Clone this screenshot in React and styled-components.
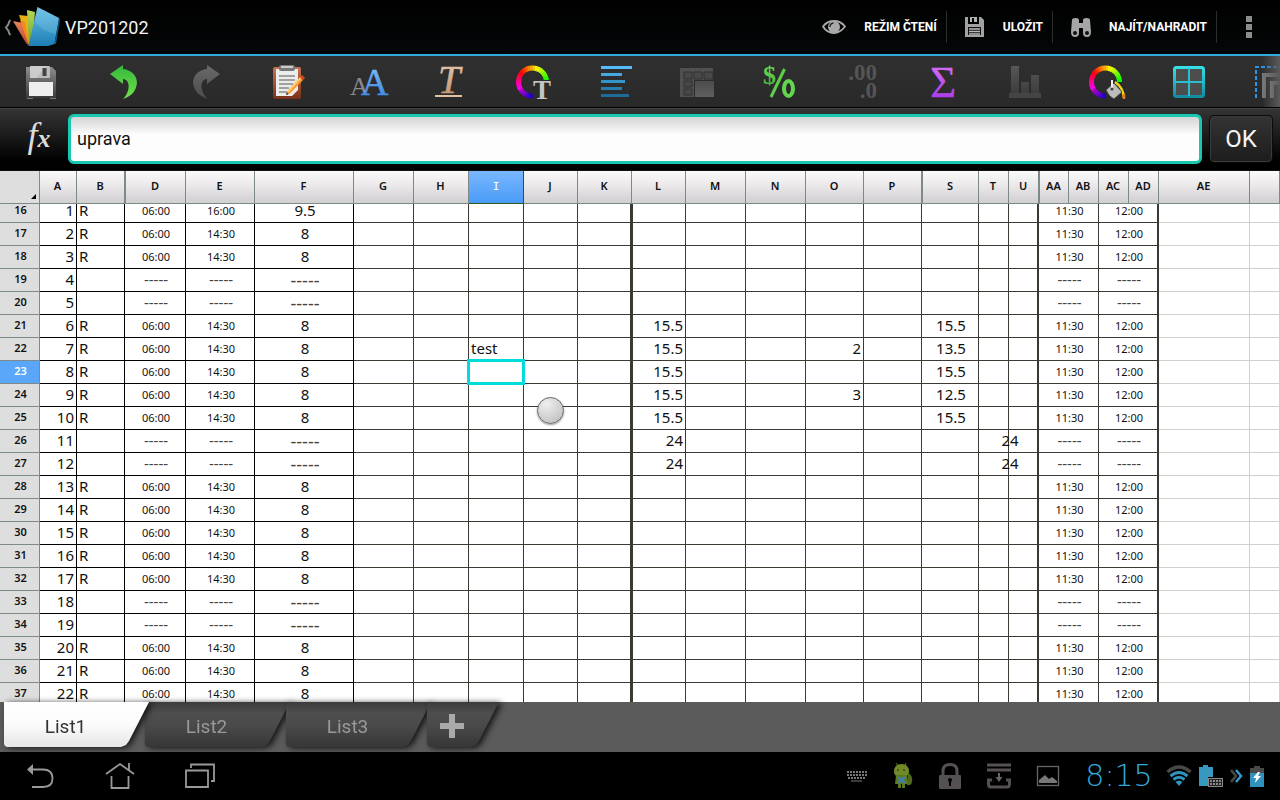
import React from 'react'
import styled, { createGlobalStyle, css } from 'styled-components'

const GlobalStyle = createGlobalStyle`
    * { box-sizing: border-box; }
    body {
        margin: 0;
        background: #000;
        font-family: Roboto, "Noto Sans", sans-serif;
    }
    button { font-family: inherit; border: 0; padding: 0; cursor: pointer; }
    svg { display: block; flex: none; overflow: visible; }
`

const Screen = styled.div`
    height: 100vh;
    display: flex;
    flex-direction: column;
    overflow: hidden;
`

/* ---------- title bar ---------- */

const TitleBar = styled.header`
    height: 56px;
    flex: none;
    display: flex;
    align-items: center;
    background: linear-gradient(#000, #050708);
    border-bottom: 2px solid #33aadc;
`

const UpButton = styled.button`
    display: flex;
    align-items: center;
    padding-left: 4px;
    background: none;
`

const Title = styled.h1`
    flex: 1;
    margin: 0 0 0 5px;
    font-size: 18px;
    font-weight: 400;
    color: #f3f3f3;
`

const Action = styled.button`
    height: 32px;
    display: flex;
    align-items: center;
    gap: 18px;
    padding: 0 9px 0 18px;
    background: none;
    border-right: 1px solid #2c2c2c;
    color: #fff;
    font-size: 12px;
    font-weight: 700;
`

const Overflow = styled.button`
    width: 63px;
    height: 32px;
    display: flex;
    align-items: center;
    justify-content: center;
    background: none;
`

/* ---------- tool bar ---------- */

const ToolBar = styled.nav`
    position: relative;
    height: 52px;
    flex: none;
    display: flex;
    overflow: hidden;
    background: linear-gradient(#303030, #292929);
    border-bottom: 1px solid #000;

    &::after {
        content: "";
        position: absolute;
        top: 0;
        right: 0;
        bottom: 0;
        width: 18px;
        background: linear-gradient(90deg, rgba(90, 90, 90, 0), #5a5a5a);
        pointer-events: none;
    }
`

const Tool = styled.button`
    width: 82px;
    flex: none;
    display: flex;
    align-items: center;
    justify-content: center;
    background: none;
`

/* ---------- formula bar ---------- */

const FormulaBar = styled.form`
    height: 63px;
    flex: none;
    display: flex;
    align-items: center;
    gap: 8px;
    padding: 0 8px 2px 0;
    background: linear-gradient(#343434, #1a1a1a 45%, #000 85%);
    border-top: 1px solid #444;
    border-bottom: 1px solid #111;
`

const FormulaField = styled.label`
    flex: 1;
    display: flex;
    align-items: center;
`

const FxMark = styled.span`
    width: 68px;
    padding: 0 0 4px 10px;
    text-align: center;
    color: #ddd;
    font: italic 400 36px/40px "Liberation Serif", serif;

    small {
        font-size: 26px;
        font-weight: 700;
    }
`

const FormulaInput = styled.input`
    flex: 1;
    min-width: 0;
    height: 50px;
    padding: 0 6px;
    border: 3px solid #19c8b0;
    border-radius: 6px;
    outline: none;
    background: linear-gradient(#d4d4d4, #fdfdfd 40%);
    color: #111;
    font-family: inherit;
    font-size: 18px;
`

const OkButton = styled.button`
    width: 62px;
    height: 46px;
    border: 1px solid #3a3a3a;
    border-radius: 4px;
    background: linear-gradient(#333, #1d1d1d);
    box-shadow: 0 0 0 1px #0a0a0a;
    color: #f5f5f5;
    font-size: 24px;
`

/* ---------- sheet ---------- */

const Sheet = styled.main`
    flex: 1;
    min-height: 0;
    overflow: hidden;
    background: #fff;
`

const Grid = styled.table`
    width: 100%;
    table-layout: fixed;
    border-collapse: separate;
    border-spacing: 0;
    font-family: "Noto Sans", "Open Sans", sans-serif;
    color: #111;
`

const Corner = styled.td`
    height: 33px;
    padding: 0 3px 4px;
    vertical-align: bottom;
    background: #dedede;
    border-right: 1px solid #7d8a87;
    border-bottom: 1px solid #7d8a87;

    svg { margin-left: auto; }
`

const ColHead = styled.th`
    height: 33px;
    padding: 0 1px 2px 0;
    background: linear-gradient(#fafafa, #e9e6e8 50%, #d9d7d9 82%, #cfd1cf);
    border-right: 1px solid #7d8a87;
    border-bottom: 1px solid #7d8a87;
    font-size: 11px;
    font-weight: 600;
    line-height: 16px;

    ${p => p.$skip && css`border-left: 1px solid #7d8a87;`}
    ${p => p.$active && css`
        padding: 0;
        background: linear-gradient(#7ab7ff, #4a9bf7);
        border-color: #2c5a1c;
        color: #fff;
        font-family: "DejaVu Sans Mono", monospace;
        font-weight: 400;
    `}
`

const RowHead = styled.th`
    padding: 0;
    background: ${p => (p.$active ? '#5aa7fa' : '#dedede')};
    color: ${p => (p.$active ? '#fff' : '#111')};
    border-right: 1px solid #7d8a87;
    border-bottom: 1px solid #7d8a87;
    font-weight: 600;
`

const edge = {
    black: '1px solid #000',
    dark: '1px solid #3a3a33',
    light: '1px solid #d0d0d0',
}

const Cell = styled.td`
    position: relative;
    padding: 0;
    border-right: ${p => edge[p.$line]};
    border-bottom: ${p => edge[p.$line]};
    ${p => p.$thick && css`border-right-width: 2px;`}
    ${p => p.$thickLeft && css`border-left: ${edge.dark};`}
`

// the top row is scrolled partly under the header, so its text hangs from the bottom
const CellText = styled.div`
    height: ${p => (p.$cut ? 18 : 22)}px;
    display: flex;
    align-items: flex-end;
    justify-content: ${p => p.$align || 'center'};
    padding: ${p => (p.$align ? '0 2px' : '0 0 0 2px')};
    font-size: ${p => p.$size}px;
    line-height: ${p => p.$leading}px;
    color: ${p => (p.$dash ? '#444' : 'inherit')};
    white-space: nowrap;
    ${p => p.$across && css`
        position: relative;
        z-index: 1;
        width: 60px;
    `}
`

const Selection = styled.div`
    position: absolute;
    inset: -2px;
    z-index: 1;
    border: 3px solid #00dcdc;
`

const TouchHandle = styled.div`
    position: absolute;
    top: 13px;
    left: 13px;
    z-index: 2;
    width: 27px;
    height: 27px;
    border: 1px solid #666;
    border-radius: 50%;
    background: radial-gradient(circle at 35% 25%, #efefef, #b8b8b8);
    box-shadow: 0 1px 2px rgba(0, 0, 0, 0.4);
`

/* ---------- sheet tabs ---------- */

const TabBar = styled.div`
    height: 50px;
    flex: none;
    display: flex;
    padding-left: 4px;
    background: #5b5b5b;
`

const Tab = styled.button`
    position: relative;
    z-index: ${p => (p.$active ? 2 : 1)};
    width: ${p => (p.$short ? 72 : 145)}px;
    height: 46px;
    margin-right: -4px;
    padding: 2px 22px 0 0;
    display: flex;
    align-items: center;
    justify-content: center;
    background: none;
    color: ${p => (p.$active ? '#333' : '#999')};
    font-size: 19px;
    filter: drop-shadow(3px 1px 3px rgba(0, 0, 0, 0.8));

    &::before {
        content: "";
        position: absolute;
        inset: 0;
        z-index: -1;
        clip-path: polygon(
            0 0, 100% 0, calc(100% - 20px) 39px, calc(100% - 23px) 43px,
            calc(100% - 28px) 45px, 3px 45px, 1px 44px, 0 42px
        );
        background: ${p => (p.$active
            ? 'linear-gradient(#fff, #fbfbfb 50%, #e4e4e4)'
            : 'linear-gradient(#3c3c3c, #4e4e4e 25%, #4a4a4a 50%, #363636)')};
    }
`

/* ---------- system bar ---------- */

const SystemBar = styled.footer`
    height: 48px;
    flex: none;
    display: flex;
    align-items: center;
    justify-content: space-between;
    background: #000;
`

const NavKeys = styled.div`
    display: flex;
`

const NavKey = styled.button`
    width: 80px;
    height: 48px;
    display: flex;
    align-items: center;
    justify-content: center;
    background: none;
`

const Tray = styled.div`
    display: flex;
    align-items: center;
    gap: 26px;
    padding-right: 16px;
`

const Status = styled.div`
    display: flex;
    align-items: center;
    gap: 7px;
    margin-left: -6px;
`

const Clock = styled.time`
    width: 80px;
    text-align: center;
    color: #33a9dc;
    font: 200 30px/40px "DejaVu Sans", sans-serif;
`

/* ---------- icons ---------- */

const serif = '"Liberation Serif", serif'

const Icon = ({ w = 36, h = 36, children }) => (
    <svg width={w} height={h} viewBox={`0 0 ${w} ${h}`} aria-hidden="true">{children}</svg>
)

const Fade = ({ id, from, to }) => (
    <linearGradient id={id} x1="0" y1="0" x2="0" y2="1">
        <stop offset="0" stopColor={from} />
        <stop offset="1" stopColor={to} />
    </linearGradient>
)

const ColorRing = () => {
    const point = a => {
        const r = (a * Math.PI) / 180
        return `${17.5 + 14 * Math.cos(r)} ${18 - 14 * Math.sin(r)}`
    }
    const steps = Array.from({ length: 27 }, (_, i) => i * 10)
    return steps.map(a => (
        <path
            key={a}
            d={`M${point(a)}A14 14 0 0 0 ${point(a + 11)}`}
            fill="none"
            strokeWidth="5"
            stroke={`hsl(${(480 - (a * 240) / 270) % 360} 100% ${a > 200 ? 40 : 50}%)`}
        />
    ))
}

const Logo = () => (
    <Icon w={56} h={42}>
        <defs>
            <Fade id="lgBlue" from="#69bde6" to="#1d7fb5" />
            <Fade id="lgRed" from="#e88458" to="#b8402c" />
            <Fade id="lgGreen" from="#b6d855" to="#6a9e2c" />
        </defs>
        <path d="M6.500 14Q5 15 4.500 18L2 21.500L4.500 25Q5 28 6.500 29" fill="none" stroke="#888" strokeWidth="2" />
        <path d="M9 15L19 17L25 40L22 37Z" fill="url(#lgRed)" />
        <path d="M15 9L24 10L26 40L24 37Z" fill="#e8b010" />
        <path d="M16 14L21 16L25 39Z" fill="#ef8a24" />
        <path d="M23 4L31 6L28 40H25Z" fill="url(#lgGreen)" />
        <path d="M33.500 1L55 12L50.500 38L44 40L24.500 40Z" fill="url(#lgBlue)" />
        <path d="M55 12L56 13.500L52 38L50.500 38Z" fill="#0d598c" />
        <path d="M33.500 1L55 12L52 28Q38 26 30 14Z" fill="#8fd3f0" opacity="0.25" />
    </Icon>
)

const SaveTool = () => (
    <Icon>
        <defs><Fade id="svBody" from="#8d8d8d" to="#3a3a3a" /></defs>
        <path d="M3 3H29L33 7V34H3Z" fill="url(#svBody)" />
        <rect x="7" y="2" width="20" height="12" rx="1" fill="#bcbcbc" />
        <path d="M7 2H24L13 14H7Z" fill="#dcdcdc" opacity="0.5" />
        <rect x="19.500" y="4" width="4" height="8" fill="#444" />
        <rect x="6" y="18" width="24" height="14" fill="#eee" />
        <rect x="4" y="34" width="6" height="1" fill="#777" />
        <rect x="27" y="34" width="6" height="1" fill="#777" />
    </Icon>
)

const UndoTool = () => (
    <Icon>
        <defs><Fade id="undo" from="#35b83c" to="#6fe04a" /></defs>
        <path d="M5 10L18 1V5C27 6 32 12 32 19C31 27 27 32 18 35C25 28 26 16 18 15V20Z" fill="url(#undo)" />
    </Icon>
)

const RedoTool = () => (
    <Icon>
        <defs><Fade id="redo" from="#6a6a6a" to="#4b4b4b" /></defs>
        <path d="M33 10L20 1V5C11 6 6 12 6 19C7 27 12 32 21 35C13 28 12 16 20 15V20Z" fill="url(#redo)" />
    </Icon>
)

const ClipboardTool = () => (
    <Icon>
        <defs><Fade id="board" from="#c97350" to="#7a3018" /></defs>
        <rect x="4" y="3" width="28" height="32" rx="2" fill="url(#board)" />
        <path d="M7 5H29V26L23 32H7Z" fill="#ececec" />
        <path d="M10 12H26M10 16H26M10 20H24M10 24H20M10 28H18" stroke="#888" strokeWidth="1.500" />
        <rect x="10" y="1" width="16" height="6" rx="2" fill="#777" />
        <rect x="12" y="2" width="12" height="2" fill="#ccc" />
        <path d="M17 31L18.500 27L31 13L34 16L21 29.500Z" fill="#f59c2c" />
        <path d="M19 28L31.500 14" stroke="#ffd58a" strokeWidth="1.200" />
        <path d="M31 13L33 11L36 14L34 16Z" fill="#e0461c" />
        <path d="M17 31L18 28.500L19.500 30Z" fill="#222" />
    </Icon>
)

const FontSizeTool = () => (
    <Icon>
        <defs><Fade id="bigA" from="#8cc4ff" to="#2f7fe0" /></defs>
        <text x="-1" y="31" fontFamily={serif} fontSize="26" fill="#8b8b8b">A</text>
        <text x="10" y="31" fontFamily={serif} fontSize="38" stroke="url(#bigA)" strokeWidth="0.500" fill="url(#bigA)">A</text>
    </Icon>
)

const TextStyleTool = () => (
    <Icon>
        <defs><Fade id="tan" from="#e9cdb4" to="#b98c69" /></defs>
        <text x="5" y="29" fontFamily={serif} fontSize="40" fontStyle="italic" stroke="url(#tan)" strokeWidth="0.500" fill="url(#tan)">T</text>
        <path d="M2 32H29" stroke="#e2c0a2" strokeWidth="2" />
    </Icon>
)

const TextColorTool = () => (
    <Icon>
        <ColorRing />
        <text x="18" y="35" fontFamily={serif} fontSize="27" fontWeight="700" fill="#c4c4c4" stroke="#2b2b2b" strokeWidth="2" paintOrder="stroke">T</text>
    </Icon>
)

const AlignTool = () => (
    <Icon>
        <path d="M4 3.500H35" stroke="#55bbfb" strokeWidth="3" />
        <path d="M4 10.500H25" stroke="#46a9e2" strokeWidth="3" />
        <path d="M4 17.500H28" stroke="#3294c9" strokeWidth="3" />
        <path d="M4 24.500H25" stroke="#277ead" strokeWidth="3" />
        <path d="M4 31.500H32" stroke="#1e6b98" strokeWidth="3" />
    </Icon>
)

const CellsTool = () => (
    <Icon>
        <defs><Fade id="cells" from="#4b4b4b" to="#5f5f5f" /></defs>
        <path d="M1 4H34V16H15V33H1Z" fill="#505050" />
        <path d="M5 8H13V15H5ZM15 8H23V15H15ZM25 8H34V15H25ZM5 17H13V23H5ZM5 25H13V31H5Z" fill="#484848" stroke="#303030" />
        <rect x="16" y="17" width="19" height="16" fill="url(#cells)" />
    </Icon>
)

const CurrencyTool = () => (
    <Icon>
        <defs><Fade id="money" from="#79e35a" to="#3fae3c" /></defs>
        <text x="2" y="20" fontFamily={serif} fontSize="26" fontWeight="700" fill="url(#money)">$</text>
        <path d="M23.500 5L10 33" stroke="#5fcf4b" strokeWidth="3" />
        <ellipse cx="27.500" cy="24.500" rx="4.500" ry="7.500" fill="none" stroke="#63d64c" strokeWidth="4" />
    </Icon>
)

const DecimalTool = () => (
    <Icon>
        <g fontFamily={serif} fontSize="23" fontWeight="700" fill="#555" textAnchor="end">
            <text x="34" y="16">.00</text>
            <text x="34" y="34">.0</text>
        </g>
    </Icon>
)

const SumTool = () => (
    <Icon>
        <defs><Fade id="sum" from="#dd7bf2" to="#a22fe8" /></defs>
        <text x="5" y="33" fontFamily={serif} fontSize="45" stroke="url(#sum)" strokeWidth="0.300" fill="url(#sum)">Σ</text>
    </Icon>
)

const ChartTool = () => (
    <Icon>
        <defs><Fade id="bars" from="#575757" to="#3d3d3d" /></defs>
        <path d="M4 2H12V29H4ZM14 18H22V29H14ZM24 11H32V29H24Z" fill="url(#bars)" />
        <rect x="2" y="29" width="32" height="5" fill="#454545" />
    </Icon>
)

const FillTool = () => (
    <Icon>
        <g transform="translate(-1 0)"><ColorRing /></g>
        <path d="M26 18Q34 23 35 34" fill="none" stroke="#f4d716" strokeWidth="2.500" />
        <path d="M35 30V35" stroke="#ef7b1c" strokeWidth="2.500" />
        <path d="M17 26L25 19L33 28L25 35Q20 33 17 26Z" fill="#bdbdbd" stroke="#444" strokeWidth="1" />
        <path d="M23 16V25" stroke="#eee" strokeWidth="2" />
        <circle cx="23" cy="25" r="1.500" fill="#444" />
    </Icon>
)

const BorderTool = () => (
    <Icon>
        <defs><Fade id="border" from="#35dfe6" to="#128ea5" /></defs>
        <rect x="3.500" y="3.500" width="29" height="29" rx="2" fill="#4d4d4d" stroke="url(#border)" strokeWidth="3" />
        <rect x="17" y="4" width="2" height="28" fill="#25bfd0" />
        <rect x="4" y="17" width="28" height="2" fill="#25bfd0" />
    </Icon>
)

const FreezeTool = () => (
    <Icon>
        <path d="M36 3H3V34" fill="none" stroke="#2a95f0" strokeWidth="2" strokeDasharray="4 2" />
        <path d="M36 11H11V34" fill="none" stroke="#777" strokeWidth="4" />
        <path d="M36 19H19V34" fill="none" stroke="#888" strokeWidth="4" />
    </Icon>
)

const EyeIcon = () => (
    <Icon w={24} h={18}>
        <path d="M1 8.500Q5 3 12 3Q19 3 23 8.500Q18 15 12 15Q5 15 1 8.500Z" fill="none" stroke="#aaa" strokeWidth="1.800" />
        <circle cx="12" cy="9" r="6" fill="#a9a9a9" />
        <path d="M8 9Q8 5.500 11.500 5" fill="none" stroke="#222" strokeWidth="1.300" />
    </Icon>
)

const DiskIcon = () => (
    <Icon w={20} h={20}>
        <path d="M0 0H3V7H14V0H16L19 3V20H0Z" fill="#a2a2a2" />
        <path d="M5 0H12V5H9V1H7V5H5Z" fill="#b4b4b4" />
        <path d="M3 10H16V18H3Z" fill="#111" />
        <path d="M4 12H15M4 14.500H15M4 17H15" stroke="#bbb" strokeWidth="1.300" />
    </Icon>
)

const BinocularsIcon = () => (
    <Icon w={20} h={20}>
        <path d="M1 3Q1 1 4.500 1Q8 1 8 3V6H12V3Q12 1 15.500 1Q19 1 19 3L20 15Q20 20 16 20Q12 20 12 16V11H8V16Q8 20 4 20Q0 20 0 15Z" fill="#a6a6a6" />
        <circle cx="4" cy="16" r="2" fill="#111" />
        <circle cx="16" cy="16" r="2" fill="#111" />
    </Icon>
)

const DotsIcon = () => (
    <Icon w={6} h={22}>
        <path d="M0 0H6V6H0ZM0 8H6V14H0ZM0 16H6V22H0Z" fill="#8c8c8c" />
    </Icon>
)

const BackKey = () => (
    <Icon w={28} h={26}>
        <path d="M1 6.500L7 1V12Z" fill="#999" />
        <path d="M7 6.500H17Q26.500 6.500 26.500 15.500Q26.500 24 17 24H6" fill="none" stroke="#999" strokeWidth="1.800" />
    </Icon>
)

const HomeKey = () => (
    <Icon w={28} h={26}>
        <path d="M0 11L14 1L28 11M23 7V0M5.500 13V25H22.500V13" fill="none" stroke="#999" strokeWidth="1.800" />
    </Icon>
)

const RecentKey = () => (
    <Icon w={28} h={24}>
        <path d="M0 6.500H22V23H0ZM5 4V0.500H28V17H25" fill="none" stroke="#999" strokeWidth="1.800" />
    </Icon>
)

const KeyboardIcon = () => (
    <Icon w={20} h={12}>
        <path d="M0 2H20M0 5H20M1 8H19" stroke="#777" strokeWidth="2" strokeDasharray="2 1" />
        <path d="M4 11H15" stroke="#777" strokeWidth="1" />
    </Icon>
)

const RobotIcon = () => (
    <Icon w={20} h={26}>
        <path d="M3 0L5 3M13 0L12 3" stroke="#5e7420" />
        <path d="M1 9Q1 1 8.500 1Q16 1 16 9Q16 14 8.500 14Q1 14 1 9Z" fill="#6f8a26" />
        <path d="M15 10Q20 12 19 19Q18 23 14 22Z" fill="#4f6a1c" />
        <path d="M3 12H14L15 21H12V25H9V21H8V25H5V21H2Z" fill="#5d7a20" />
        <path d="M4 13L8 15L13 13L11 17L13 21L8 19L4 21L6 17Z" fill="#3f7fa8" />
        <path d="M4 7H6M10 7H12" stroke="#222" />
    </Icon>
)

const LockIcon = () => (
    <Icon w={22} h={26}>
        <path d="M4 13V8Q4 1.500 11 1.500Q18 1.500 18 8V13" fill="none" stroke="#555152" strokeWidth="3" />
        <rect y="12" width="22" height="14" rx="1" fill="#555152" />
        <path d="M11 16V23" stroke="#000" strokeWidth="2" />
        <circle cx="11" cy="17" r="2" fill="#000" />
    </Icon>
)

const DownloadIcon = () => (
    <Icon w={24} h={26}>
        <path d="M0 2H24M0 7H24" stroke="#555152" strokeWidth="3" />
        <path d="M5 17H1.500V21Q1.500 24 4 24H20Q22.500 24 22.500 21V17H19" fill="none" stroke="#555152" strokeWidth="3" />
        <path d="M12 10V16" stroke="#666" strokeWidth="2" />
        <path d="M8.500 14H15.500L12 19Z" fill="#666" />
    </Icon>
)

const PictureIcon = () => (
    <Icon w={22} h={20}>
        <rect x="0.500" y="0.500" width="21" height="19" fill="none" stroke="#666" strokeWidth="1.300" />
        <path d="M2 17V14L8 9L12 13L15 11L20 15V17Z" fill="#777" />
    </Icon>
)

const WifiIcon = () => (
    <Icon w={26} h={20}>
        <path d="M1.500 6Q13 -4 24.500 6" fill="none" stroke="#484848" strokeWidth="3.500" />
        <path d="M4.500 10Q13 3 21.500 10M7.500 13.500Q13 9 18.500 13.500" fill="none" stroke="#2f93bd" strokeWidth="3" />
        <path d="M9.500 16Q13 13 16.500 16L13 20Z" fill="#2f93bd" />
    </Icon>
)

const DockBatteryIcon = () => (
    <Icon w={24} h={22}>
        <path d="M0 2H4V0H9V2H14V12H9V21H0Z" fill="#3899c0" />
        <rect x="9.500" y="13.500" width="14" height="8" fill="#222" stroke="#888" />
        <path d="M11 16H22M11 19H22" stroke="#aaa" strokeWidth="1.500" strokeDasharray="2 1" />
    </Icon>
)

const ArrowsIcon = () => (
    <Icon w={13} h={14}>
        <path d="M1 1L6 7L1 13" fill="none" stroke="#484848" strokeWidth="2.500" />
        <path d="M6 1L11 7L6 13" fill="none" stroke="#3399c8" strokeWidth="2.500" />
    </Icon>
)

const BatteryIcon = () => (
    <Icon w={14} h={21}>
        <path d="M0 2H4V0H10V2H14V7H0Z" fill="#484848" />
        <rect y="7" width="14" height="14" fill="#2f93bd" />
        <path d="M8 6L3 12H6L5 17L11 10H8L10 6Z" fill="#fff" />
    </Icon>
)

/* ---------- data ---------- */

const tools = [
    ['Uložit', SaveTool],
    ['Zpět', UndoTool],
    ['Znovu', RedoTool],
    ['Schránka', ClipboardTool],
    ['Velikost písma', FontSizeTool],
    ['Styl písma', TextStyleTool],
    ['Barva písma', TextColorTool],
    ['Zarovnání', AlignTool],
    ['Buňky', CellsTool],
    ['Formát čísla', CurrencyTool],
    ['Desetinná místa', DecimalTool],
    ['Součet', SumTool],
    ['Graf', ChartTool],
    ['Barva výplně', FillTool],
    ['Ohraničení', BorderTool],
    ['Ukotvit příčky', FreezeTool],
]

// name, width, skip = hidden columns in front of it
const columns = [
    ['A', 37], ['B', 48], ['D', 61, true], ['E', 69], ['F', 99], ['G', 60],
    ['H', 55], ['I', 55], ['J', 54], ['K', 54], ['L', 54], ['M', 60],
    ['N', 60], ['O', 58], ['P', 58], ['S', 57, true], ['T', 30], ['U', 30],
    ['AA', 30, true], ['AB', 30], ['AC', 30], ['AD', 30], ['AE', 91],
]

const DASH = '-----'
const freeDays = [4, 5, 11, 12, 18, 19]
const hours = { 6: '15.5', 7: '15.5', 8: '15.5', 9: '15.5', 10: '15.5', 11: '24', 12: '24' }
const extra = { 7: '2', 9: '3' }
const total = { 6: '15.5', 7: '13.5', 8: '15.5', 9: '12.5', 10: '15.5' }
const night = { 11: '24', 12: '24' }

const rows = Array.from({ length: 22 }, (_, i) => {
    const day = i + 1
    const free = freeDays.includes(day)
    return {
        no: i + 16,
        day,
        mark: free ? '' : 'R',
        from: free ? DASH : '06:00',
        to: free ? DASH : day === 1 ? '16:00' : '14:30',
        sum: free ? DASH : day === 1 ? '9.5' : '8',
        pauseFrom: free ? DASH : '11:30',
        pauseTo: free ? DASH : '12:00',
    }
})

// [font size, line height]
const sizeOf = (small, dash) => {
    if (small) return dash ? [15, 24] : [11, 22]
    return dash ? [18, 22] : [15, 23]
}

const Value = ({ line = 'dark', thick, thickLeft, span, small, align, across, cut, text, children }) => {
    const dash = text === DASH
    const [size, leading] = sizeOf(small, dash)
    return (
        <Cell $line={line} $thick={thick} $thickLeft={thickLeft} colSpan={span}>
            <CellText $align={align} $size={size} $leading={leading} $dash={dash} $across={across} $cut={cut}>
                {text}
            </CellText>
            {children}
        </Cell>
    )
}

const Row = ({ row }) => {
    const cut = row.no === 16
    return (
        <tr>
            <RowHead scope="row" $active={row.no === 23}>
                <CellText $cut={cut} $size={11} $leading={24}>{row.no}</CellText>
            </RowHead>
            <Value cut={cut} line="black" align="flex-end" text={row.day} />
            <Value cut={cut} line="black" align="flex-start" text={row.mark} />
            <Value cut={cut} line="black" small text={row.from} />
            <Value cut={cut} line="black" small text={row.to} />
            <Value cut={cut} line="black" text={row.sum} />
            <Value cut={cut} />
            <Value cut={cut} />
            <Value cut={cut} align="flex-start" text={row.no === 22 ? 'test' : ''}>
                {row.no === 23 && <Selection />}
            </Value>
            <Value cut={cut}>{row.no === 24 && <TouchHandle />}</Value>
            <Value cut={cut} thick />
            <Value cut={cut} thickLeft align="flex-end" text={hours[row.day]} />
            <Value cut={cut} />
            <Value cut={cut} />
            <Value cut={cut} align="flex-end" text={extra[row.day]} />
            <Value cut={cut} />
            <Value cut={cut} text={total[row.day]} />
            <Value cut={cut} across={row.day in night} text={night[row.day]} />
            <Value cut={cut} thick />
            <Value cut={cut} span={2} small text={row.pauseFrom} />
            <Value cut={cut} span={2} small thick text={row.pauseTo} />
            <Value cut={cut} line="light" />
            <Value cut={cut} line="light" />
        </tr>
    )
}

const App = () => {
    return (
        <Screen>
            <GlobalStyle />
            <TitleBar>
                <UpButton type="button" aria-label="Nahoru"><Logo /></UpButton>
                <Title>VP201202</Title>
                <Action type="button"><EyeIcon />REŽIM ČTENÍ</Action>
                <Action type="button"><DiskIcon />ULOŽIT</Action>
                <Action type="button"><BinocularsIcon />NAJÍT/NAHRADIT</Action>
                <Overflow type="button" aria-label="Další možnosti"><DotsIcon /></Overflow>
            </TitleBar>

            <ToolBar>
                {tools.map(([label, Glyph]) => (
                    <Tool key={label} type="button" aria-label={label}><Glyph /></Tool>
                ))}
            </ToolBar>

            <FormulaBar onSubmit={e => e.preventDefault()}>
                <FormulaField>
                    <FxMark>f<small>x</small></FxMark>
                    <FormulaInput type="text" defaultValue="uprava" />
                </FormulaField>
                <OkButton type="submit">OK</OkButton>
            </FormulaBar>

            <Sheet>
                <Grid>
                    <colgroup>
                        <col width="40" />
                        {columns.map(([name, width]) => <col key={name} width={width} />)}
                        <col />
                    </colgroup>
                    <thead>
                        <tr>
                            <Corner>
                                <Icon w={5} h={5}><path d="M5 0V5H0Z" fill="#000" /></Icon>
                            </Corner>
                            {columns.map(([name, , skip]) => (
                                <ColHead key={name} scope="col" $skip={skip} $active={name === 'I'}>{name}</ColHead>
                            ))}
                            <ColHead />
                        </tr>
                    </thead>
                    <tbody>
                        {rows.map(row => <Row key={row.no} row={row} />)}
                    </tbody>
                </Grid>
            </Sheet>

            <TabBar>
                <Tab type="button" $active>List1</Tab>
                <Tab type="button">List2</Tab>
                <Tab type="button">List3</Tab>
                <Tab type="button" $short aria-label="Přidat list">
                    <Icon w={24} h={24}><path d="M9 0H15V9H24V15H15V24H9V15H0V9H9Z" fill="#aaa" /></Icon>
                </Tab>
            </TabBar>

            <SystemBar>
                <NavKeys>
                    <NavKey type="button" aria-label="Zpět"><BackKey /></NavKey>
                    <NavKey type="button" aria-label="Domů"><HomeKey /></NavKey>
                    <NavKey type="button" aria-label="Poslední aplikace"><RecentKey /></NavKey>
                </NavKeys>
                <Tray>
                    <KeyboardIcon />
                    <RobotIcon />
                    <LockIcon />
                    <DownloadIcon />
                    <PictureIcon />
                    <Status>
                        <Clock>8:15</Clock>
                        <WifiIcon />
                        <DockBatteryIcon />
                        <ArrowsIcon />
                        <BatteryIcon />
                    </Status>
                </Tray>
            </SystemBar>
        </Screen>
    )
}

export default App
